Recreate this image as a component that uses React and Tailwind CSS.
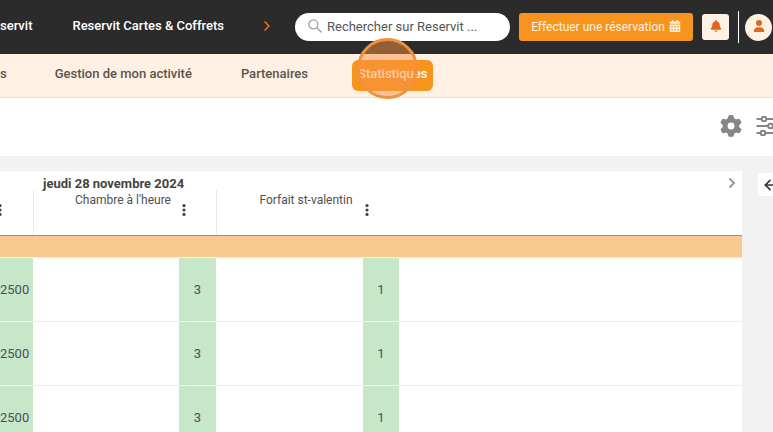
import React from "react";
import { FaBell, FaCalendarDays, FaGear, FaUser } from "react-icons/fa6";
import { LuArrowLeft, LuChevronRight } from "react-icons/lu";

const rows = [
  { id: 1, price: 2500, room: 3, pack: 1 },
  { id: 2, price: 2500, room: 3, pack: 1 },
  { id: 3, price: 2500, room: 3, pack: 1 },
];

const Dots = ({ label }) => (
  <button type="button" aria-label={label} className="flex w-4 shrink-0 justify-center">
    <svg viewBox="0 0 4 12" className="h-3 w-1 fill-[#444]">
      <circle cx="2" cy="1.6" r="1.6" />
      <circle cx="2" cy="6" r="1.6" />
      <circle cx="2" cy="10.4" r="1.6" />
    </svg>
  </button>
);

const SearchIcon = () => (
  <svg viewBox="0 0 14 14" className="mb-[2px] size-[14px] shrink-0 fill-none stroke-[#a3a3a3]" strokeWidth="1.4">
    <circle cx="5.4" cy="5.4" r="4.5" />
    <path d="M8.8 8.8 13.2 13" strokeLinecap="round" />
  </svg>
);

const SlidersIcon = () => (
  <svg viewBox="0 0 22 20" className="h-5 w-[22px] shrink-0 fill-none stroke-[#868686]" strokeWidth="2" strokeLinecap="round">
    <path d="M1.300 3h4M10.500 3H21M1.300 10h10.500M17 10h4M1.300 17h3M9.500 17H21" />
    <circle cx="8" cy="3" r="2.300" />
    <circle cx="14.500" cy="10" r="2.300" />
    <circle cx="7" cy="17" r="2.300" />
  </svg>
);

const TopBar = () => (
  <header className="flex h-[54px] items-center bg-[#2b2b2b] text-[13px] font-medium text-white">
    <nav className="flex items-center pb-[2px]">
      <a href="#reservit">servit</a>
      <a href="#cartes" className="ml-10 whitespace-nowrap">Reservit Cartes &amp; Coffrets</a>
    </nav>
    <button type="button" aria-label="Suivant" className="ml-auto pb-[2px] text-[#e8701a]">
      <LuChevronRight className="size-4" strokeWidth={2.5} />
    </button>
    <label className="ml-5 flex h-7 w-[215px] items-center gap-[5px] rounded-[14px] bg-white px-[13px]">
      <SearchIcon />
      <input
        type="text"
        aria-label="Rechercher"
        placeholder="Rechercher sur Reservit ..."
        className="w-full min-w-0 font-normal text-[#555] outline-none placeholder:text-[#555]"
      />
    </label>
    <button
      type="button"
      className="ml-[9px] flex h-7 w-[174px] shrink-0 items-center justify-center gap-1 rounded-[3px] bg-[#f7941e] text-xs font-normal whitespace-nowrap text-[#fff1e3]"
    >
      Effectuer une réservation
      <FaCalendarDays className="mb-[2px] size-3" />
    </button>
    <button
      type="button"
      aria-label="Notifications"
      className="ml-[9px] flex h-[26px] w-[27px] shrink-0 items-center justify-center rounded-[3px] bg-[#fef0e2] pb-[2px] text-[#e2661a]"
    >
      <FaBell className="size-3" />
    </button>
    <div className="ml-[9px] h-8 w-px shrink-0 bg-white" />
    <button
      type="button"
      aria-label="Mon compte"
      className="mr-px ml-[6px] flex size-[27px] shrink-0 items-center justify-center rounded-full bg-[#fef0e2] pb-[2px] text-[#e2661a]"
    >
      <FaUser className="size-3" />
    </button>
  </header>
);

const SubNav = () => (
  <nav className="flex h-11 items-center border-b border-[#f7dfc8] bg-[#fef0e2] pb-1 text-[13px] font-medium text-[#5a544e] shadow-[0_1px_1px_#eeeeee]">
    <a href="#tarifs">s</a>
    <a href="#activite" className="ml-12 whitespace-nowrap">Gestion de mon activité</a>
    <a href="#partenaires" className="ml-[49px]">Partenaires</a>
    <a href="#stats" className="relative mt-1 ml-11 flex h-[31px] items-center rounded-md bg-[#f7941e] px-[6px] pb-1 text-white">
      Statistiques
      <span className="absolute -top-[22px] left-[5px] size-[61px] rounded-full border-[3px] border-[#f0913f] bg-[#fa9246]/50" />
    </a>
  </nav>
);

const HeadCell = ({ name }) => (
  <th colSpan={2} className="border-l border-[#e8e8e8] p-0 align-top font-normal">
    <div className="flex h-10 items-center pl-[39px]">
      <span className="w-[100px] self-start pt-[2px] text-center text-xs whitespace-nowrap">{name}</span>
      <span className="ml-[3px]">
        <Dots label={`Options ${name}`} />
      </span>
    </div>
  </th>
);

const Planning = () => (
  <table className="w-full table-fixed border-separate border-spacing-0 bg-white text-[13px] text-[#4f4f4f]">
    <colgroup>
      <col className="w-[33px]" />
      <col className="w-[146px]" />
      <col className="w-[37px]" />
      <col className="w-[147px]" />
      <col className="w-9" />
      <col />
    </colgroup>
    <thead>
      <tr>
        <th colSpan={6} className="h-[19px] p-0 text-left align-top">
          <div className="flex h-[19px] items-start justify-between pt-[5px] pr-[2px] pl-[43px]">
            <span className="leading-[15px] font-bold text-[#444]">jeudi 28 novembre 2024</span>
            <button type="button" aria-label="Jour suivant" className="-mt-px text-[#999]">
              <LuChevronRight className="size-4" strokeWidth={3} />
            </button>
          </div>
        </th>
      </tr>
      <tr className="h-[45px]">
        <th className="p-0 align-top">
          <div className="-ml-2 flex h-10 items-center">
            <Dots label="Options" />
          </div>
        </th>
        <HeadCell name="Chambre à l'heure" />
        <HeadCell name="Forfait st-valentin" />
        <th />
      </tr>
      <tr>
        <td colSpan={6} className="h-[22px] border-t border-[#8f8f85] bg-[#fac98e] p-0" />
      </tr>
    </thead>
    <tbody className="text-center">
      {rows.map((row) => (
        <tr key={row.id} className="h-16">
          <td className="border-t border-[#f1f7f1] bg-[#c6e8c8] p-0 text-left">{row.price}</td>
          <td className="border-t border-[#ebebeb] p-0" />
          <td className="border-t border-[#f1f7f1] bg-[#c6e8c8] p-0">{row.room}</td>
          <td className="border-t border-[#ebebeb] p-0" />
          <td className="border-t border-[#f1f7f1] bg-[#c6e8c8] p-0">{row.pack}</td>
          <td className="border-t border-[#ebebeb] p-0" />
        </tr>
      ))}
    </tbody>
  </table>
);

export default function App() {
  return (
    <div className="h-screen overflow-hidden bg-[#f2f2f2] font-[Roboto,sans-serif]">
      <TopBar />
      <SubNav />
      <div className="flex h-[58px] items-center justify-end gap-[14px] overflow-hidden bg-white pb-[2px] text-[#868686]">
        <button type="button" aria-label="Paramètres">
          <FaGear className="size-[22px]" />
        </button>
        <button type="button" aria-label="Filtres" className="w-[17px] overflow-hidden">
          <SlidersIcon />
        </button>
      </div>
      <div className="flex pt-[15px]">
        <main className="min-w-0 flex-1">
          <Planning />
        </main>
        <aside className="w-[31px] shrink-0 overflow-hidden pt-[2px] pl-4">
          <button type="button" aria-label="Replier" className="flex h-[23px] w-7 items-center rounded bg-white pl-1 text-[#333]">
            <LuArrowLeft className="size-4" strokeWidth={2.5} />
          </button>
        </aside>
      </div>
    </div>
  );
}
